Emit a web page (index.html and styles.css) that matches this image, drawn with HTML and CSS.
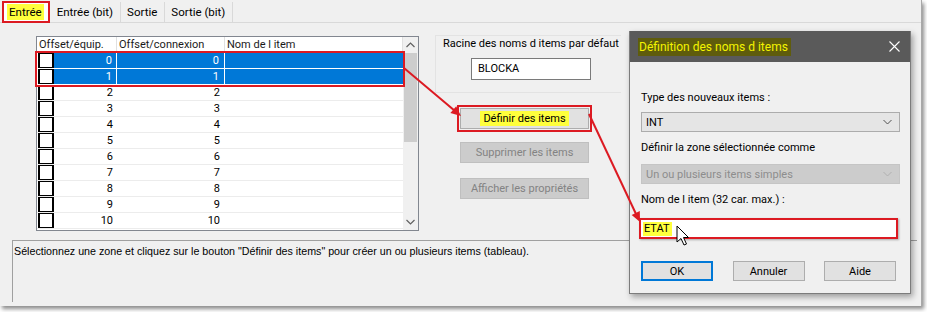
FILE: index.html
```html
<!DOCTYPE html>
<html lang="fr">
<head>
    <meta charset="UTF-8">
    <title>Définition des items</title>
    <link rel="stylesheet" href="styles.css">
</head>
<body>
    <div class="window">
        <div class="tabs">
            <div class="tab active"><span class="mark">Entrée</span></div>
            <div class="tab">Entrée (bit)</div>
            <div class="tab">Sortie</div>
            <div class="tab">Sortie (bit)</div>
        </div>

        <div class="page">
            <div class="workarea">
                <div class="grid">
                    <div class="grid-body">
                        <div class="row head">
                            <div class="cell">Offset/équip.</div>
                            <div class="cell">Offset/connexion</div>
                            <div class="cell">Nom de l item</div>
                        </div>
                        <div class="sel-group">
                            <div class="row selected">
                                <div class="cell num"><span class="check"></span>0</div>
                                <div class="cell num">0</div>
                                <div class="cell"></div>
                            </div>
                            <div class="row selected">
                                <div class="cell num"><span class="check"></span>1</div>
                                <div class="cell num">1</div>
                                <div class="cell"></div>
                            </div>
                        </div>
                        <div id="rows"></div>
                    </div>
                    <div class="scrollbar">
                        <div class="sb-btn">
                            <svg width="9" height="6" viewBox="0 0 9 6"><polyline points="0.5,5 4.5,1 8.5,5" fill="none" stroke="#606060" stroke-width="1.2"/></svg>
                        </div>
                        <div class="sb-thumb"></div>
                        <div class="sb-track"></div>
                        <div class="sb-btn">
                            <svg width="9" height="6" viewBox="0 0 9 6"><polyline points="0.5,1 4.5,5 8.5,1" fill="none" stroke="#606060" stroke-width="1.2"/></svg>
                        </div>
                    </div>
                </div>

                <div class="actions">
                    <div class="root-group">
                        <div class="root-label">Racine des noms d items par défaut</div>
                        <div class="root-input">BLOCKA</div>
                    </div>
                    <button class="btn marked"><span class="mark">Définir des items</span></button>
                    <button class="btn" disabled>Supprimer les items</button>
                    <button class="btn" disabled>Afficher les propriétés</button>
                </div>
            </div>

            <div class="status">Sélectionnez une zone et cliquez sur le bouton "Définir des items" pour créer un ou plusieurs items (tableau).</div>
        </div>

        <!-- dialog window on top -->
        <div class="dialog">
            <div class="dialog-title">
                <span class="title-mark">Définition des noms d items</span>
                <svg class="close" width="11" height="11" viewBox="0 0 11 11"><path d="M0.5 0.5 L10.5 10.5 M10.5 0.5 L0.5 10.5" stroke="#ffffff" stroke-width="1.1"/></svg>
            </div>
            <div class="dialog-body">
                <div class="dlg-label first">Type des nouveaux items :</div>
                <div class="combo">
                    <span>INT</span>
                    <svg width="9" height="6" viewBox="0 0 9 6"><polyline points="0.5,1 4.5,5 8.5,1" fill="none" stroke="#505050" stroke-width="1"/></svg>
                </div>
                <div class="dlg-label">Définir la zone sélectionnée comme</div>
                <div class="combo disabled">
                    <span>Un ou plusieurs items simples</span>
                    <svg width="9" height="6" viewBox="0 0 9 6"><polyline points="0.5,1 4.5,5 8.5,1" fill="none" stroke="#b0b0b0" stroke-width="1"/></svg>
                </div>
                <div class="dlg-label">Nom de l item (32 car. max.) :</div>
                <div class="name-input"><span class="mark">ETAT</span></div>
                <div class="dlg-buttons">
                    <button class="dbtn default">OK</button>
                    <button class="dbtn">Annuler</button>
                    <button class="dbtn">Aide</button>
                </div>
            </div>
        </div>

        <svg class="annotations" width="927" height="312" viewBox="0 0 927 312">
            <line x1="404" y1="68" x2="455" y2="111" stroke="#dc1a22" stroke-width="2"/>
            <polygon points="461,116 450.4,113 456.2,106.2" fill="#dc1a22"/>
            <line x1="589" y1="114" x2="636" y2="214" stroke="#dc1a22" stroke-width="2"/>
            <polygon points="640,222 631.7,214.9 639.8,211.1" fill="#dc1a22"/>
            <path d="M677 226 L677 242 L681 238.5 L684 245 L686.5 244 L683.5 237.5 L688.5 237.5 Z" fill="#ffffff" stroke="#000000" stroke-width="1" stroke-linejoin="round"/>
        </svg>
    </div>

    <script>
        // unselected rows 2..10
        var html = "";
        for (var i = 2; i <= 10; i++) {
            html += '<div class="row">' +
                '<div class="cell num"><span class="check"></span>' + i + '</div>' +
                '<div class="cell num">' + i + '</div>' +
                '<div class="cell"></div>' +
                '</div>';
        }
        document.getElementById("rows").innerHTML = html;
    </script>
</body>
</html>
```

FILE: styles.css
```css
body {
    margin: 0;
    width: 927px;
    height: 312px;
    background: #ffffff;
    font-family: Roboto, "Liberation Sans", sans-serif;
    font-size: 11px;
    color: #000000;
    overflow: hidden;
}

.window {
    position: relative;
    width: 921px;
    height: 306px;
    background: #f0f0f0;
    border-right: 1px solid #a8a8a8;
    box-shadow: 2px 3px 4px rgba(0, 0, 0, 0.45);
}

.mark {
    background: #ffff3c;
}

/* tabs */
.tabs {
    display: flex;
    height: 22px;
    padding-left: 3px;
    border-bottom: 1px solid #d9d9d9;
}

.tab {
    display: flex;
    align-items: center;
    padding: 0 7px 0 6px;
    border-right: 1px solid #d9d9d9;
    height: 20px;
    margin-top: 2px;
    font-size: 11.5px;
}

.tab.active {
    background: #ffffff;
    padding: 0 4px;
    outline: 2px solid #dc1a22;
    outline-offset: -1px;
    margin-right: 2px;
}

.tab.active .mark {
    padding: 1px 2px;
}

/* tab page */
.page {
    padding: 13px 0 0 12px;
}

.workarea {
    display: flex;
    padding-left: 24px;
}

.grid {
    display: flex;
    width: 381px;
    height: 193px;
    border: 1px solid #828790;
    background: #ffffff;
}

.grid-body {
    width: 366px;
}

.row {
    display: grid;
    grid-template-columns: 80px 108px 178px;
    height: 16px;
}

.row .cell {
    border-bottom: 1px solid #ececec;
    line-height: 15px;
    overflow: hidden;
    white-space: nowrap;
}

.row.head .cell {
    border-right: 1px solid #e0e0e0;
    border-bottom: 1px solid #e0e0e0;
    padding-left: 2px;
    color: #1a1a1a;
}

.row .cell.num {
    display: flex;
    justify-content: flex-end;
    padding-right: 4px;
}

.row .cell.num:nth-child(2) {
    padding-right: 5px;
}

.check {
    width: 12px;
    height: 13px;
    border: 2px solid #000000;
    border-top-width: 1px;
    background: #ffffff;
    margin-right: auto;
    margin-left: 1px;
}

.sel-group {
    outline: 2px solid #dc1a22;
    position: relative;
    z-index: 1;
}

.row.selected .cell {
    background: #0078d7;
    color: #ffffff;
    border-bottom: 1px solid #ffffff;
    border-right: 1px solid #ffffff;
}

.row.selected .cell:first-child {
    background: linear-gradient(to right, transparent 17px, #0078d7 17px);
}

.row.selected .cell:last-child {
    border-right: none;
}

.scrollbar {
    display: flex;
    flex-direction: column;
    width: 15px;
    background: #f0f0f0;
}

.sb-btn {
    height: 16px;
    display: flex;
    align-items: center;
    justify-content: center;
}

.sb-thumb {
    height: 89px;
    margin: 0 1px;
    background: #cdcdcd;
}

.sb-track {
    flex: 1;
}

/* right-hand actions */
.actions {
    display: flex;
    flex-direction: column;
    width: 186px;
    margin-left: 16px;
    margin-top: -1px;
}

.root-group {
    height: 56px;
    border: 1px solid #e3e3e3;
    border-right: none;
}

.root-label {
    margin: 1px 0 0 7px;
    line-height: 14px;
    white-space: nowrap;
}

.root-input {
    width: 112px;
    height: 20px;
    margin: 7px 0 0 35px;
    padding-left: 6px;
    line-height: 20px;
    background: #ffffff;
    border: 1px solid #7a7a7a;
}

.btn {
    width: 129px;
    height: 21px;
    margin-left: 25px;
    margin-top: 13px;
    padding: 0;
    font-family: inherit;
    font-size: 11px;
    background: #e1e1e1;
    border: 1px solid #adadad;
    color: #000000;
}

.btn.marked {
    margin-top: 15px;
    outline: 2px solid #dc1a22;
    outline-offset: 1px;
}

.btn.marked .mark {
    padding: 1px 3px;
}

.btn:disabled {
    background: #cccccc;
    border-color: #bfbfbf;
    color: #838383;
}

.btn:disabled:last-child {
    margin-top: 15px;
}

/* status text */
.status {
    margin-top: 9px;
    width: 905px;
    height: 62px;
    border-top: 1px solid #a0a0a0;
    border-left: 1px solid #a0a0a0;
    padding: 3px 0 0 1px;
    box-sizing: border-box;
    font-family: "Liberation Sans", sans-serif;
    font-size: 10.7px;
    line-height: 14px;
}

/* dialog */
.dialog {
    position: absolute;
    left: 629px;
    top: 31px;
    width: 280px;
    height: 262px;
    background: #f0f0f0;
    border: 1px solid #7c7c7c;
    border-top: none;
    box-shadow: 2px 3px 6px rgba(0, 0, 0, 0.35);
}

.dialog-title {
    display: flex;
    align-items: center;
    justify-content: space-between;
    height: 31px;
    padding: 0 10px 0 8px;
    background: #5a5a5a;
}

.title-mark {
    background: #5f5c0c;
    color: #f4f400;
    padding: 2px 3px 2px 1px;
    font-size: 12px;
}

.dialog-body {
    display: flex;
    flex-direction: column;
    padding: 0 10px 0 11px;
}

.dlg-label {
    line-height: 15px;
    margin-top: 8px;
}

.dlg-label.first {
    margin-top: 28px;
}

.combo {
    display: flex;
    align-items: center;
    justify-content: space-between;
    height: 20px;
    margin-top: 7px;
    padding: 0 7px 0 4px;
    background: #e5e5e5;
    border: 1px solid #acacac;
    box-sizing: border-box;
}

.combo.disabled {
    margin-top: 9px;
    background: #cccccc;
    border-color: #c5c5c5;
    color: #8d8d8d;
}

.name-input {
    height: 21px;
    margin: 11px 0 0 -2px;
    width: 259px;
    box-sizing: border-box;
    border: 2px solid #dc1a22;
    background: #ffffff;
    padding: 2px 0 0 2px;
    box-shadow: 1px 1px 2px rgba(0, 0, 0, 0.3);
}

.name-input .mark {
    padding: 0 2px 1px 1px;
    line-height: 14px;
}

.dlg-buttons {
    display: flex;
    justify-content: space-between;
    width: 255px;
    margin-top: 22px;
}

.dbtn {
    width: 72px;
    height: 20px;
    padding: 0;
    font-family: inherit;
    font-size: 11px;
    background: #e1e1e1;
    border: 1px solid #adadad;
}

.dbtn.default {
    border: 2px solid #0078d7;
}

.annotations {
    position: absolute;
    left: 0;
    top: 0;
    pointer-events: none;
    z-index: 5;
}
```
